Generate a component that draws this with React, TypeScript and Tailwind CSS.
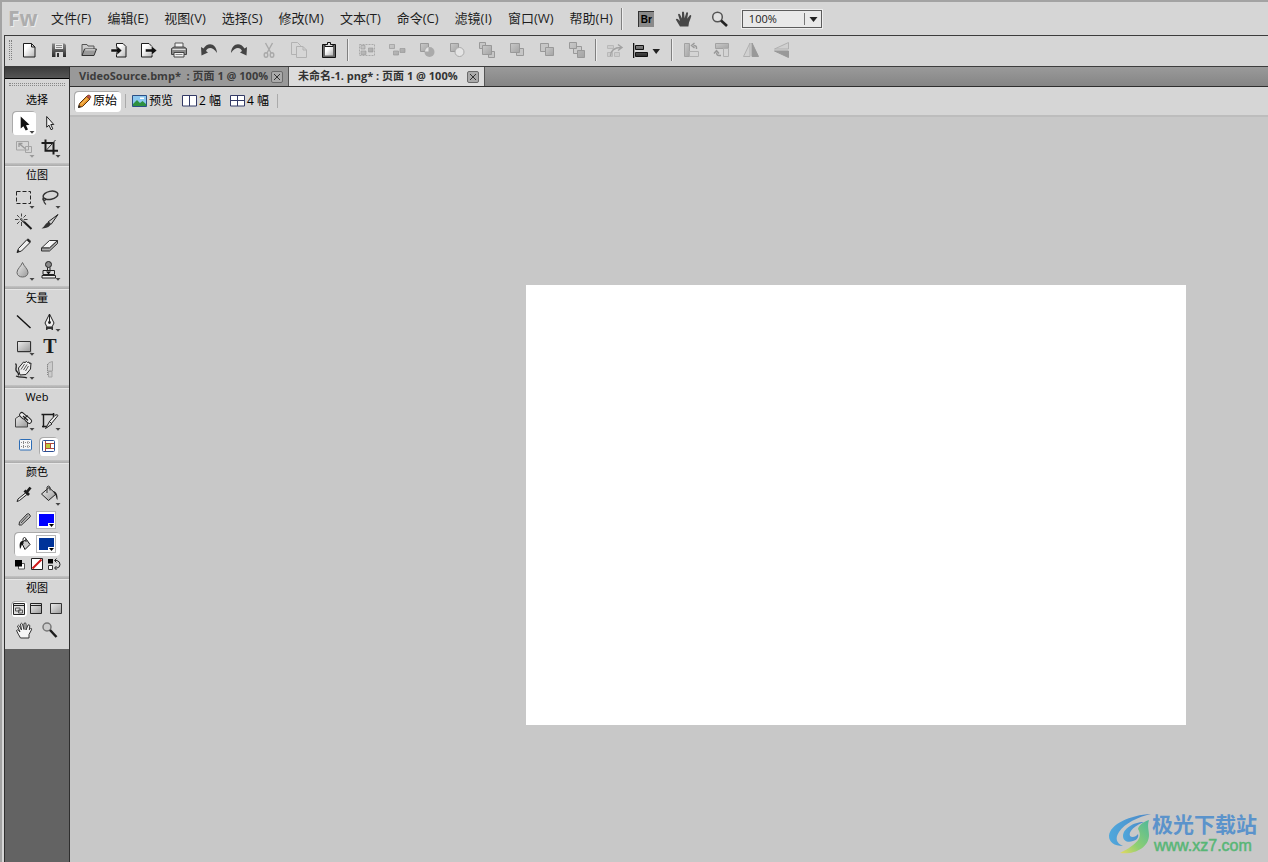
import React from "react";

const menus = [
  "文件(F)",
  "编辑(E)",
  "视图(V)",
  "选择(S)",
  "修改(M)",
  "文本(T)",
  "命令(C)",
  "滤镜(I)",
  "窗口(W)",
  "帮助(H)",
];

type IconProps = { children: React.ReactNode };

function BarIcon({ children }: IconProps) {
  return (
    <svg className="size-5" viewBox="0 0 20 20" fill="none" aria-hidden="true">
      {children}
    </svg>
  );
}

function Defs() {
  return (
    <svg className="absolute size-0" aria-hidden="true">
      <defs>
        <linearGradient id="paper" x1="0" y1="0" x2="1" y2="1">
          <stop offset="0.3" stopColor="#fff" />
          <stop offset="1" stopColor="#b4b4b4" />
        </linearGradient>
        <linearGradient id="steel" x1="0" y1="0" x2="0" y2="1">
          <stop offset="0" stopColor="#888" />
          <stop offset="1" stopColor="#2a2a2a" />
        </linearGradient>
        <linearGradient id="mist" x1="0" y1="0" x2="1" y2="1">
          <stop offset="0" stopColor="#c9c9c9" />
          <stop offset="1" stopColor="#a4a4a4" />
        </linearGradient>
        <linearGradient id="panel" x1="0" y1="0" x2="1" y2="1">
          <stop offset="0" stopColor="#eee" />
          <stop offset="1" stopColor="#999" />
        </linearGradient>
        <linearGradient id="swirl" x1="0" y1="0" x2="1" y2="0">
          <stop offset="0" stopColor="#4fa8dc" />
          <stop offset="1" stopColor="#4c86c6" />
        </linearGradient>
        <linearGradient id="leaf" x1="1" y1="0" x2="0" y2="1">
          <stop offset="0" stopColor="#4fb89a" />
          <stop offset="0.6" stopColor="#8fcf72" />
          <stop offset="1" stopColor="#e6d960" />
        </linearGradient>
      </defs>
    </svg>
  );
}

const fileTools = [
  {
    label: "新建",
    icon: (
      <path d="M4.5 3.5h8l3.5 3.5v10H4.5zM12.5 3.5V7H16" fill="url(#paper)" stroke="#1d1d1d" />
    ),
  },
  {
    label: "保存",
    icon: (
      <>
        <path d="M3 3.5h12.5L17 5v12H3z" fill="url(#steel)" />
        <path d="M6 3.5h8V9H6z" fill="#e8e8e8" />
        <path d="M7 5.5h6M7 7.5h6" stroke="#888" />
        <path d="M6.5 12H14v5H6.5z" fill="#d9d9d9" />
        <path d="M8 13h2v4H8z" fill="#333" />
      </>
    ),
  },
  {
    label: "打开",
    icon: (
      <>
        <path d="M3 15.500V4.500h5l1 1.500h6v3" fill="#ccc" stroke="#555" />
        <path d="M3 15.500 5.500 9h12L15 15.500z" fill="#999" stroke="#333" />
        <path d="M6.200 9.800h10" stroke="#eee" />
      </>
    ),
  },
  {
    label: "导入",
    icon: (
      <>
        <path d="M7.5 3.5H14l3 3V17H7.5z" fill="url(#paper)" stroke="#1d1d1d" />
        <path d="M2 9h6V6l5 4.500L8 15v-3H2z" fill="#111" stroke="#eee" strokeWidth=".5" />
      </>
    ),
  },
  {
    label: "导出",
    icon: (
      <>
        <path d="M2.5 3.5H10l3 3V17H2.500z" fill="url(#paper)" stroke="#1d1d1d" />
        <path d="M6.500 9h6V6l5.500 4.500-5.500 4.500v-3h-6z" fill="#111" stroke="#eee" strokeWidth=".5" />
      </>
    ),
  },
  {
    label: "打印",
    icon: (
      <>
        <path d="M6 8V3h8v5" fill="#f2f2f2" stroke="#555" />
        <path d="M2.500 8.500 5 7h10l2.500 1.500v6h-15z" fill="#8a8a8a" stroke="#444" />
        <path d="M3.500 9.500h13" stroke="#ddd" />
        <path d="M5 12.500h10V17H5z" fill="#f2f2f2" stroke="#444" />
        <path d="M6.500 14.500h7" stroke="#888" />
      </>
    ),
  },
  {
    label: "撤消",
    icon: (
      <path d="M2 7l.5 8.500L9 12.500 7 11C8.500 7 14 6.500 18 13 17.500 3 8.500 1.500 4.500 8.500z" fill="#444" />
    ),
  },
  {
    label: "重做",
    icon: (
      <path d="M18 7l-.5 8.500L11 12.500 13 11C11.500 7 6 6.500 2 13 2.500 3 11.500 1.500 15.500 8.500z" fill="#444" />
    ),
  },
  {
    label: "剪切",
    icon: (
      <g stroke="#a9a9a9" strokeWidth="1.4">
        <path d="M6.500 3 12 13M13.500 3 8 13" />
        <ellipse cx="7" cy="15" rx="1.8" ry="2.3" />
        <ellipse cx="13" cy="15" rx="1.8" ry="2.3" />
      </g>
    ),
  },
  {
    label: "复制",
    icon: (
      <g fill="#d6d6d6" stroke="#b2b2b2">
        <path d="M2.500 2.500h6l3 3v9h-9z" />
        <path d="M7.500 6.500H14l3.500 3.500v7.500h-10zM14 6.500V10h3.500" />
      </g>
    ),
  },
  {
    label: "粘贴",
    icon: (
      <>
        <path d="M3.500 4.500h13v13h-13z" fill="#666" stroke="#111" />
        <path d="M6 7h8v8.500H6z" fill="url(#paper)" />
        <path d="M6 6.500v-2h2.500v-2h3v2H14v2z" fill="#ddd" stroke="#111" />
      </>
    ),
  },
];

const arrangeTools = [
  {
    label: "组合",
    icon: (
      <>
        <path d="M2.500 4.500h15v11h-15z" stroke="#aaa" strokeDasharray="2 1" />
        <path d="M4 5.500h4V9H4zM4 11h5v3.500H4zM11.500 8H16v4h-4.500z" fill="url(#mist)" stroke="#999" strokeWidth=".6" />
      </>
    ),
  },
  {
    label: "取消组合",
    icon: (
      <path d="M2.500 4.500h5v4h-5zM6.500 11h5v4h-5zM13 8.500h5v4h-5z" fill="url(#mist)" stroke="#999" strokeWidth=".7" />
    ),
  },
  {
    label: "接合",
    icon: (
      <>
        <path d="M3.500 3.500h8v8h-8z" fill="url(#mist)" stroke="#999" />
        <circle cx="12.5" cy="12" r="5" fill="#aaa" />
        <path d="M8 11.500q.3-3.500 3.500-4.500v4.500z" fill="#e2e2e2" />
      </>
    ),
  },
  {
    label: "拆分",
    icon: (
      <>
        <path d="M3.500 3.500h8v8h-8z" fill="url(#mist)" stroke="#999" />
        <circle cx="12.5" cy="12" r="4.5" fill="#e4e4e4" stroke="#aaa" />
      </>
    ),
  },
  {
    label: "移到最前",
    icon: (
      <g fill="#c6c6c6" stroke="#999">
        <path d="M2.500 2.500h6v6h-6zM11.500 11.500h6v6h-6z" />
        <path d="M5.500 5.500h9v9h-9z" fill="url(#mist)" />
      </g>
    ),
  },
  {
    label: "前移",
    icon: (
      <g fill="#c6c6c6" stroke="#999">
        <path d="M9.500 8.500h7v7h-7z" />
        <path d="M3.500 3.500h9v9h-9z" fill="url(#mist)" />
      </g>
    ),
  },
  {
    label: "后移",
    icon: (
      <g fill="#c6c6c6" stroke="#999">
        <path d="M3.500 3.500h8v8h-8z" />
        <path d="M8.500 7.500h8v8h-8z" fill="url(#mist)" />
      </g>
    ),
  },
  {
    label: "移到最后",
    icon: (
      <g fill="url(#mist)" stroke="#999">
        <path d="M6.500 6.500h8v7h-8z" fill="#ccc" />
        <path d="M2.500 2.500h7v6h-7zM10.500 10.500h7v7h-7z" />
      </g>
    ),
  },
];

const orientTools = [
  {
    label: "方向",
    icon: (
      <>
        <path d="M2.500 5.500h6v3h-6zM2.500 12.500h5v4h-5zM9.500 12.500h5v4h-5z" fill="#ccc" stroke="#b8b8b8" />
        <path d="M5.500 16Q6 7.500 16 7.500M13 4.500l4 3-4 3" stroke="#a2a2a2" strokeWidth="1.4" />
      </>
    ),
  },
];

const rotateTools = [
  {
    label: "逆时针旋转",
    icon: (
      <>
        <path d="M3.500 3.500h5v13h-5z" fill="url(#mist)" stroke="#a2a2a2" />
        <path d="M8.500 11.500h9v5h-9z" fill="#d4d4d4" stroke="#b0b0b0" />
        <path d="M15.500 9V7.500q0-2-3-2M13.500 3l-3 2.500 3 2.500" stroke="#999" strokeWidth="1.4" />
      </>
    ),
  },
  {
    label: "顺时针旋转",
    icon: (
      <>
        <path d="M4.500 3.500h13v5h-13z" fill="url(#mist)" stroke="#a2a2a2" />
        <path d="M12.500 8.500h5v8h-5z" fill="#d4d4d4" stroke="#b0b0b0" />
        <path d="M10 15.500H8q-2.500 0-2.500-3M3 13.500l2.500-3 2.500 3" stroke="#999" strokeWidth="1.4" />
      </>
    ),
  },
  {
    label: "水平翻转",
    icon: (
      <>
        <path d="M9 3v13.500H2.500z" fill="#d0d0d0" stroke="#b0b0b0" />
        <path d="M11 3v13.500h6.500z" fill="#999" stroke="#999" />
      </>
    ),
  },
  {
    label: "垂直翻转",
    icon: (
      <>
        <path d="M17.500 2.500V9h-14z" fill="#d0d0d0" stroke="#b0b0b0" />
        <path d="M17.500 17.500V11h-14z" fill="#999" stroke="#999" />
      </>
    ),
  },
];

type Tool = { label: string; icon: React.ReactNode };

function ToolGroup({ tools }: { tools: Tool[] }) {
  return (
    <div className="flex">
      {tools.map((tool) => (
        <button
          key={tool.label}
          type="button"
          aria-label={tool.label}
          className="flex h-7 w-[30px] items-center justify-center"
        >
          <BarIcon>{tool.icon}</BarIcon>
        </button>
      ))}
    </div>
  );
}

function Divider() {
  return <span className="h-[22px] w-[2px] border-l border-[#808080] bg-[#eee]" />;
}

function MenuBar() {
  return (
    <header className="flex h-[35px] items-center border-t-2 border-[#a3a3a3] bg-[#d6d6d6] pl-[6px]">
      <span className="w-[43px] font-['Noto_Sans'] text-[21px] font-bold text-[#adadad] [text-shadow:1px_1px_0_#ececec]">
        Fw
      </span>
      <nav className="flex gap-4 text-[13px] text-[#1e1e1e]">
        {menus.map((menu) => (
          <button key={menu} type="button" className="whitespace-nowrap">
            {menu}
          </button>
        ))}
      </nav>
      <div className="ml-2 flex items-center">
        <Divider />
        <button type="button" aria-label="Bridge" className="ml-[15px] flex size-5 items-center">
          <span className="flex size-4 items-center justify-center border-t border-l border-[#333] bg-[#8a8a8a] font-['Liberation_Sans'] text-[10px] font-bold text-black">
            Br
          </span>
        </button>
        <button type="button" aria-label="手形" className="ml-4">
          <BarIcon>
            <path
              d="M6 17.500Q3.500 13.500 1.800 10.600q.7-1.300 2-.5L6 12 4 5.500q.8-1.500 1.900-.3L8 9.500V3.200q1-1.400 2 0l.6 6 1.700-5.600q1.200-1 1.800.3l-.9 5.800 2.600-3.400q1.300-.6 1.500.7-1 3.500-2.300 6.500l-.6 4z"
              fill="#484848"
            />
          </BarIcon>
        </button>
        <button type="button" aria-label="缩放" className="ml-4">
          <BarIcon>
            <circle cx="7.500" cy="8" r="4.8" fill="#e2e2e2" stroke="#555" strokeWidth="1.5" />
            <path d="M11 11.500 17 17" stroke="#222" strokeWidth="2.6" />
          </BarIcon>
        </button>
        <div className="relative ml-3 h-[18px] w-20">
          <select
            aria-label="缩放比例"
            className="block h-[18px] w-20 appearance-none border border-[#5c5c5c] bg-[#e9e9e9] pl-[6px] text-[11px] leading-4 text-[#222] outline outline-[#eee]"
          >
            <option>100%</option>
          </select>
          <svg className="pointer-events-none absolute top-0 right-0 h-[18px] w-5" viewBox="0 0 20 18" aria-hidden="true">
            <path d="M2 3h1v12H2z" fill="#777" />
            <path d="M7.500 7h8l-4 5z" fill="#222" />
          </svg>
        </div>
      </div>
    </header>
  );
}

function ToolBar() {
  return (
    <div className="flex h-8 items-center border-y border-l border-[#3c3c3c] bg-[#d6d6d6] pb-[2px] pl-1">
      <span className="mr-[2px] h-5 w-[3px] border-x border-dotted border-[#808080]" />
      <ToolGroup tools={fileTools} />
      <span className="mx-[3px] flex">
        <Divider />
      </span>
      <ToolGroup tools={arrangeTools} />
      <span className="mx-[3px] flex">
        <Divider />
      </span>
      <ToolGroup tools={orientTools} />
      <button type="button" aria-label="对齐" className="flex h-7 w-[30px] items-center">
        <svg className="h-5 w-[30px]" viewBox="0 0 30 20" aria-hidden="true">
          <path d="M3 3h1.300v15H3z" fill="#111" />
          <path d="M5.500 5.500h8v4h-8zM5.500 12.500h12v4h-12z" fill="url(#steel)" stroke="#111" />
          <path d="M22.500 9H30l-3.800 5z" fill="#222" />
        </svg>
      </button>
      <span className="mr-[3px] ml-[11px] flex">
        <Divider />
      </span>
      <ToolGroup tools={rotateTools} />
    </div>
  );
}

type ToolButtonProps = {
  label: string;
  more?: boolean;
  active?: boolean;
  faded?: boolean;
  children: React.ReactNode;
};

function ToolButton({ label, more, active, faded, children }: ToolButtonProps) {
  return (
    <button
      type="button"
      aria-label={label}
      className={active ? "size-6 rounded-sm bg-white shadow-[inset_1px_1px_0_#aaa]" : "size-6"}
    >
      <svg className="size-6" viewBox="0 0 24 24" fill="none" aria-hidden="true">
        {children}
        {more && <path d="M17.500 20h5L20 22.800z" fill={faded ? "#999" : "#444"} />}
      </svg>
    </button>
  );
}

type SectionProps = { title: string; first?: boolean; children: React.ReactNode };

function Section({ title, first, children }: SectionProps) {
  return (
    <section className="flex flex-col pb-1">
      {!first && <span className="h-1 border-b border-[#e6e6e6] bg-linear-to-b from-[#c4c4c4] to-[#aaa]" />}
      <h2 className="h-[19px] text-center text-[11px] leading-4 text-black">{title}</h2>
      {children}
    </section>
  );
}

function ToolGrid({ children }: IconProps) {
  return <div className="grid grid-cols-[24px_24px] gap-x-[2px] pl-[7px]">{children}</div>;
}

function Swatch({ label, className }: { label: string; className: string }) {
  return (
    <button
      type="button"
      aria-label={label}
      className="relative flex h-[18px] w-5 items-center justify-center border border-[#b5b5b5] bg-white"
    >
      <span className={className} />
      <svg className="absolute right-0 bottom-0 h-[5px] w-[7px]" viewBox="0 0 7 5" aria-hidden="true">
        <path d="M0 0h7v5H0z" fill="#fff" />
        <path d="M1 1h5L3.500 4z" fill="#000" />
      </svg>
    </button>
  );
}

function SideBar() {
  return (
    <aside className="flex w-[66px] shrink-0 flex-col border-x border-[#2e2e2e] bg-[#636363]">
      <div className="h-3 border-b border-black bg-linear-to-b from-[#3c3c3c] to-[#555]" />
      <div className="bg-[#d6d6d6] pb-[3px]">
        <div className="h-[13px] px-1 pt-1">
          <div className="h-[3px] border-y border-dotted border-[#888]" />
        </div>
        <Section title="选择" first>
          <ToolGrid>
            <ToolButton label="指针" more active>
              <path d="M8.700 5.500v12l2.700-2.200 2.300 4.300 2.300-1.200-2-4.200 3.500-.4z" fill="#111" />
            </ToolButton>
            <ToolButton label="部分选定">
              <path d="M8.700 5.500v10.700l2.300-2 2 4.500 1.800-.8-2-4.400h3z" fill="#eee" stroke="#222" />
            </ToolButton>
            <ToolButton label="缩放工具" more faded>
              <path d="M4.500 6.500h12V15h-12zM13.500 11.500h6v6h-6z" stroke="#a4a4a4" />
              <path d="M7 12V8.500h3.500M7 8.500l6 5" stroke="#999" strokeWidth="1.3" />
            </ToolButton>
            <ToolButton label="裁剪" more>
              <path d="M7.500 4.500v11.300H20M3.500 8h12v11.500" stroke="#1c1c1c" strokeWidth="2" />
              <path d="M8.500 15 17.500 5" stroke="#333" />
            </ToolButton>
          </ToolGrid>
        </Section>
        <Section title="位图">
          <ToolGrid>
            <ToolButton label="选取框" more>
              <path d="M4.500 5.500h14v12h-14z" stroke="#222" strokeDasharray="4 2" />
            </ToolButton>
            <ToolButton label="套索" more>
              <ellipse cx="12.5" cy="9.3" rx="7.5" ry="4" transform="rotate(-12 12.5 9.3)" stroke="#333" strokeWidth="1.5" />
              <path d="M5.500 11.500c-2 2.500 1 4 2 2.200s-2.500-2-2 .5 1 2.800 2.500 4.300" stroke="#333" strokeWidth="1.2" />
            </ToolButton>
            <ToolButton label="魔术棒">
              <path d="M9.500 3.500v3M9.500 12v4M3 9.500h3.500M12 9.500h3.500M5 5l2.500 2.500M14 5l-2.500 2.500M5 14l2.500-2.500" stroke="#444" />
              <path d="M8.500 8.500 19.500 19" stroke="#1c1c1c" strokeWidth="2" />
              <path d="M9 8.500l3 3" stroke="#eee" />
            </ToolButton>
            <ToolButton label="刷子">
              <path d="M20 4.500 13 14.500l-3-2.500z" fill="#ccc" stroke="#222" />
              <path d="M10.500 12c2 .3 2.500 2 1.500 3.500-2 2.500-5 2.500-8.500 3 3-1.500 4-5.500 7-6.500z" fill="#333" />
            </ToolButton>
            <ToolButton label="铅笔">
              <path d="M5 18.500l1.500-4 8.500-9c1.500-1 4 1 3 3L9.500 17z" fill="#eee" stroke="#222" />
              <path d="M5 18.500l1-3 2 2zM14.500 6l3 3 1-1.500-2-2.500z" fill="#222" />
            </ToolButton>
            <ToolButton label="橡皮擦">
              <path d="M11.500 6.500h8l-8 7.500h-8z" fill="#f5f5f5" stroke="#333" />
              <path d="M3.500 14h8l8-7.500v3l-8 7.500h-8z" fill="#aaa" stroke="#333" />
            </ToolButton>
            <ToolButton label="模糊" more>
              <path d="M10.500 4.500c1.500 4 5.500 6.500 5.500 10 0 6-11 6-11 0 0-3.500 4-6 5.500-10z" fill="url(#panel)" stroke="#666" />
            </ToolButton>
            <ToolButton label="橡皮图章" more>
              <circle cx="10.5" cy="6.5" r="3" fill="#888" stroke="#222" />
              <path d="M9.500 9.500v3M12 9.500v3" stroke="#222" />
              <path d="M5 12.500h11.500v4H5z" fill="#ddd" stroke="#222" />
              <path d="M4 17.500h13.500V20H4z" fill="#eee" stroke="#222" />
              <path d="M8 13.500h5l-2.500 3z" fill="#111" />
            </ToolButton>
          </ToolGrid>
        </Section>
        <Section title="矢量">
          <ToolGrid>
            <ToolButton label="直线">
              <path d="M5 6.500 18.500 19" stroke="#111" strokeWidth="1.4" />
            </ToolButton>
            <ToolButton label="钢笔" more>
              <path d="M11.500 5l4.500 9-2 4H9l-2-4z" fill="#eee" stroke="#222" />
              <path d="M11.500 5v8" stroke="#222" />
              <circle cx="11.5" cy="13.5" r="1.4" fill="#222" />
              <path d="M8 18h7v3h-1.500v-1h-4v1H8z" fill="#333" />
            </ToolButton>
            <ToolButton label="矩形" more>
              <path d="M5.500 8.500h14V20h-14z" fill="#b0b0b0" />
              <path d="M5.500 8.500h13v10h-13z" fill="url(#panel)" stroke="#333" />
            </ToolButton>
            <button type="button" aria-label="文本" className="size-6 font-['Liberation_Serif'] text-[20px] leading-[26px] font-bold text-[#1c1c1c]">
              T
            </button>
            <ToolButton label="自由变形" more>
              <path d="M7 14.500l-.5-3.500 5-6 1.500.5 1.500-1 1 1 1.500-.5.500 1.500 1.500-.5-.5 6-4.500 5.500-6 .5z" fill="#eee" stroke="#222" />
              <path d="M9 12.500l3.500-5.500M11.500 13l3.500-5.500M13.500 14l3-5" stroke="#555" />
              <path d="M3.500 6.500c2 2 0 4 .5 6.500s3 2 2.500 5.500M4 19c4 2 8 .5 11 2" stroke="#222" strokeWidth="1.3" />
            </ToolButton>
            <ToolButton label="刀子">
              <path d="M9.500 14V8q.5-3 5-3.500V14zM10.500 14.500h3.500V20h-3.500z" fill="#ccc" stroke="#a5a5a5" />
              <path d="M9.500 7v12" stroke="#888" strokeDasharray="1 1" />
            </ToolButton>
          </ToolGrid>
        </Section>
        <Section title="Web">
          <ToolGrid>
            <ToolButton label="热点" more>
              <path d="M3.500 10.500 8 7.500h7.500v11.500h-12z" fill="url(#panel)" stroke="#444" />
              <g fill="#eee" stroke="#222">
                <rect x="7.5" y="5.5" width="7.5" height="4.5" rx="2" transform="rotate(42 11 7.5)" />
                <rect x="12.500" y="10" width="7.5" height="4.5" rx="2" transform="rotate(42 16.500 12)" />
              </g>
              <path d="M11 8l5 4.500" stroke="#222" strokeWidth="1.4" />
            </ToolButton>
            <ToolButton label="切片" more>
              <path d="M5.500 19.500V6.500h11M3.500 6.500h3M4 18.500h6M15.500 5v4" stroke="#1c1c1c" strokeWidth="1.4" />
              <path d="M20 7.500c-1-1.500-3-.5-4 1L11 14l2 2z" fill="#eee" stroke="#222" />
              <path d="M11.500 13.500l2.500 2.500-6.500 4.500z" fill="#ddd" stroke="#222" />
            </ToolButton>
            <ToolButton label="隐藏切片和热点">
              <rect x="7.5" y="7.5" width="12" height="10.5" rx="1" fill="#f7f7f7" stroke="#2c6cb5" />
              <path d="M9 10.500h9M9 14.500h9M11.500 9v8M16 9v8" stroke="#8a8a8a" strokeDasharray="1 1" />
            </ToolButton>
            <button
              type="button"
              aria-label="显示切片和热点"
              className="mt-[5px] ml-px size-[19px] rounded-sm bg-white shadow-[inset_1px_1px_0_#aaa]"
            >
              <svg className="size-[19px]" viewBox="0 0 19 19" fill="none" aria-hidden="true">
                <path d="M6.500 6.500H15M6.500 11.500H15M6.500 4v10M11.500 6.500v5" stroke="#b04a3a" />
                <path d="M7 7h4v4H7z" fill="#bcc83c" />
                <rect x="3.5" y="3.5" width="12" height="11" rx="1" stroke="#2c4f94" />
              </svg>
            </button>
          </ToolGrid>
        </Section>
        <Section title="颜色">
          <ToolGrid>
            <ToolButton label="滴管">
              <path d="M14 9.500l-8 6.500-1 2.500 2.500-1 8-6.500z" fill="#eee" stroke="#222" />
              <path d="M12.500 7.500l4.500 4.500M14.500 9.500 18.500 4.500" stroke="#1c1c1c" strokeWidth="2.8" />
            </ToolButton>
            <ToolButton label="油漆桶" more>
              <path d="M3.500 11 11 4.500l7 6.500-7.500 6.500z" fill="url(#panel)" stroke="#222" />
              <path d="M9 10V4q1-2 3 0v3.500" stroke="#333" />
              <path d="M15 8c3 .5 5 3 4.500 9-1.500-1-1-4-2.500-5.500z" fill="#222" />
            </ToolButton>
          </ToolGrid>
          <div className="flex h-[25px] items-center pl-[7px]">
            <ToolButton label="笔触颜色">
              <path d="M7 17l.5-3 7.500-8q2-1 3 1t-1 3l-7.500 7z" fill="#bbb" stroke="#333" />
              <path d="M9 15l7-7.500" stroke="#444" />
            </ToolButton>
            <Swatch label="选择笔触颜色" className="h-3 w-[15px] bg-[#0000ff]" />
          </div>
          <div className="ml-[9px] flex h-6 w-[46px] items-center rounded-sm bg-white shadow-[inset_1px_1px_0_#aaa]">
            <button type="button" aria-label="填充颜色" className="size-[22px]">
              <svg className="size-[22px]" viewBox="0 0 22 22" fill="none" aria-hidden="true">
                <path d="M7.500 9.500l5-3 3.500 5-5 5z" fill="#ccc" stroke="#111" />
                <path d="M9 11V5.500q1.500-2 3 0V9" stroke="#222" />
                <path d="M9 8C6 8 5 10.500 6 16c1.500-1.500 1-4 3-6z" fill="#111" />
              </svg>
            </button>
            <Swatch label="选择填充颜色" className="h-3 w-[15px] bg-[#003399]" />
          </div>
          <div className="flex h-4 items-center gap-[5px] pl-2">
            <button type="button" aria-label="默认颜色" className="size-[13px]">
              <svg className="size-[13px]" viewBox="0 0 13 13" aria-hidden="true">
                <path d="M5.500 5.500h6V11h-6z" fill="#fff" stroke="#555" />
                <path d="M2 2h7v6.500H2z" fill="#000" />
              </svg>
            </button>
            <button type="button" aria-label="无颜色" className="size-3">
              <svg className="size-3" viewBox="0 0 12 12" aria-hidden="true">
                <path d="M.5.5h11v11H.5z" fill="#fff" stroke="#222" />
                <path d="M1.500 10.500l9-9" stroke="#d01818" strokeWidth="2" />
              </svg>
            </button>
            <button type="button" aria-label="交换颜色" className="size-[13px]">
              <svg className="size-[13px]" viewBox="0 0 13 13" fill="none" aria-hidden="true">
                <path d="M0 1h5v4.500H0z" fill="#000" />
                <path d="M.5 7.500h4v4h-4z" fill="#fff" stroke="#333" />
                <path d="M7 2.500h2q3 1 3 4T9 10H7M8.500.5l-2 2 2 2M8.500 8l-2 2 2 2" stroke="#222" />
              </svg>
            </button>
          </div>
        </Section>
        <Section title="视图">
          <div className="flex h-[19px] items-center pl-[6px]">
            <button
              type="button"
              aria-label="标准屏幕模式"
              className="flex size-4 items-center justify-center rounded-sm bg-white shadow-[inset_1px_1px_0_#aaa]"
            >
              <svg className="size-3" viewBox="0 0 12 12" fill="none" aria-hidden="true">
                <path d="M.5.5h11v11H.5z" fill="#ddd" stroke="#222" />
                <path d="M1 2.500h10" stroke="#222" />
                <path d="M2.500 5H7v3H2.500zM5.500 7h4v3h-4z" stroke="#555" />
              </svg>
            </button>
            <button type="button" aria-label="带有菜单的全屏模式" className="ml-[3px] size-3">
              <svg className="size-3" viewBox="0 0 12 12" aria-hidden="true">
                <path d="M.5.5h11v10H.5z" fill="url(#panel)" stroke="#222" />
                <path d="M1 2.500h10" stroke="#222" />
              </svg>
            </button>
            <button type="button" aria-label="全屏模式" className="ml-2 size-3">
              <svg className="size-3" viewBox="0 0 12 12" aria-hidden="true">
                <path d="M.5.5h11v10H.5z" fill="url(#panel)" stroke="#333" />
              </svg>
            </button>
          </div>
          <ToolGrid>
            <ToolButton label="手形工具">
              <path
                d="M8.500 20Q6 16 4.500 12.500q1-1.300 2 0L8 14 5.500 8q1-1.500 2 0l2 4-1-6q1.200-1.500 2 0l1.500 5.500v-6q1.200-1.200 2 0V12l2-5q1.500-.8 1.800.8l-.5 4 1.500-1.500q1.200 0 .7 1.500L17 16.500V20z"
                fill="#f5f5f5"
                stroke="#333"
              />
            </ToolButton>
            <ToolButton label="缩放镜">
              <circle cx="9" cy="9" r="4" fill="#ccc" stroke="#777" strokeWidth="1.5" />
              <path d="M12 12l6.500 7" stroke="#1c1c1c" strokeWidth="2.5" />
            </ToolButton>
          </ToolGrid>
        </Section>
      </div>
    </aside>
  );
}

function CloseButton() {
  return (
    <button
      type="button"
      aria-label="关闭"
      className="flex size-3 items-center justify-center rounded-xs border border-[#6a6a6a] bg-[#aaa]"
    >
      <svg className="size-2" viewBox="0 0 8 8" aria-hidden="true">
        <path d="M1 1l6 6M7 1 1 7" stroke="#333" />
      </svg>
    </button>
  );
}

function Tabs() {
  return (
    <div className="flex h-5 border-b border-[#2e2e2e] bg-linear-to-b from-[#9a9a9a] to-[#858585] text-[11px] font-bold">
      <div className="flex w-[219px] items-center justify-between border-r border-[#555] bg-[#999] pr-[5px] pl-[9px] text-[#3c3c3c]">
        <button type="button" className="whitespace-pre">
          {"VideoSource.bmp*  : 页面 1 @ 100%"}
        </button>
        <CloseButton />
      </div>
      <div className="flex w-[196px] items-center justify-between border-r border-[#555] bg-[#dcdcdc] pr-[5px] pl-[9px] text-[#333]">
        <button type="button" className="whitespace-nowrap">
          未命名-1. png* : 页面 1 @ 100%
        </button>
        <CloseButton />
      </div>
    </div>
  );
}

function ViewBar() {
  return (
    <div className="flex h-[30px] items-center border-b-2 border-[#bdbdbd] bg-[#d6d6d6] pl-1 text-[12px] text-black">
      <button type="button" className="flex h-[21px] w-[47px] items-center gap-px rounded-sm bg-white pl-[3px] whitespace-nowrap shadow-[inset_1px_1px_0_#aaa]">
        <svg className="size-[15px] shrink-0" viewBox="0 0 15 15" aria-hidden="true">
          <path d="M1.500 13.500l1-4L10 2l3 3-7.500 7.500z" fill="#e8962a" stroke="#5b3310" />
          <path d="M1 14l.8-3L4 13z" fill="#222" />
          <path d="M9.500 2.500 11 1q2-.5 3 2l-1.500 2z" fill="#c0504a" stroke="#5b3310" strokeWidth=".6" />
          <path d="M4 10.500l6-6" stroke="#ffd27a" />
        </svg>
        原始
      </button>
      <span className="mx-1 h-[14px] w-px bg-[#aaa]" />
      <button type="button" className="ml-[2px] flex items-center gap-[2px]">
        <svg className="h-3 w-[15px]" viewBox="0 0 15 12" aria-hidden="true">
          <path d="M.5.5h14v11H.5z" fill="#8cc8f0" stroke="#2b4f86" />
          <path d="M1 9l4-4 3 3 2.500-2L14 9v2H1z" fill="#2f9140" />
          <path d="M8 2.500h4V4H8z" fill="#fff" />
        </svg>
        预览
      </button>
      <button type="button" className="ml-[9px] flex items-center gap-[2px]">
        <svg className="h-3 w-[15px]" viewBox="0 0 15 12" aria-hidden="true">
          <path d="M.5.5h14V11H.5z" fill="#fff" stroke="#333a66" />
          <path d="M7.500 1v10" stroke="#333a66" />
        </svg>
        2 幅
      </button>
      <button type="button" className="ml-[9px] flex items-center gap-[2px]">
        <svg className="h-3 w-[15px]" viewBox="0 0 15 12" aria-hidden="true">
          <path d="M.5.5h14V11H.5z" fill="#fff" stroke="#333a66" />
          <path d="M7.500 1v10M1 5.500h13" stroke="#333a66" />
        </svg>
        4 幅
      </button>
      <span className="ml-2 h-[14px] w-px bg-[#aaa]" />
    </div>
  );
}

function Watermark() {
  return (
    <a href="#" className="absolute right-[11px] bottom-[6px] flex items-center">
      <svg className="h-11 w-11" viewBox="0 0 44 44" aria-hidden="true">
        <path d="M43 2C22 3 2 12 1 24c0 6 5 10 14 10-7-3-8-8-4-14C17 11 30 5 43 2z" fill="url(#swirl)" />
        <path d="M36 10c-11 0-21 7-21 14 0 5 5 7 10 5 4-1 6-4 5-7-2 3-6 4-8 2-2-5 6-11 14-14z" fill="url(#swirl)" />
        <path d="M41 8c-6 2-10 5-11 9 5 8 0 15-18 24 14 2 29-5 29-18 0-5-2-9 0-15z" fill="url(#leaf)" />
      </svg>
      <span className="flex flex-col">
        <span className="text-[21px] leading-6 font-bold text-[#5b93cb]">极光下载站</span>
        <span className="pl-[2px] font-['Liberation_Sans'] text-[16px] leading-5 text-[#58b676] [-webkit-text-stroke:0.5px_#58b676]">
          www.xz7.com
        </span>
      </span>
    </a>
  );
}

function App() {
  return (
    <div className="flex min-h-screen flex-col border-l-2 border-[#a3a3a3] bg-[#d6d6d6] font-['Open_Sans','Noto_Sans_CJK_SC',sans-serif]">
      <Defs />
      <MenuBar />
      <div className="flex flex-1 flex-col pl-[2px]">
        <ToolBar />
        <div className="flex flex-1">
          <SideBar />
          <div className="flex min-w-0 flex-1 flex-col">
            <Tabs />
            <ViewBar />
            <main className="relative flex-1 bg-[#c8c8c8] pt-[168px] pr-[82px]">
              <div className="ml-auto h-[440px] w-full max-w-[660px] bg-white" />
              <Watermark />
            </main>
          </div>
        </div>
      </div>
    </div>
  );
}

export default App;
